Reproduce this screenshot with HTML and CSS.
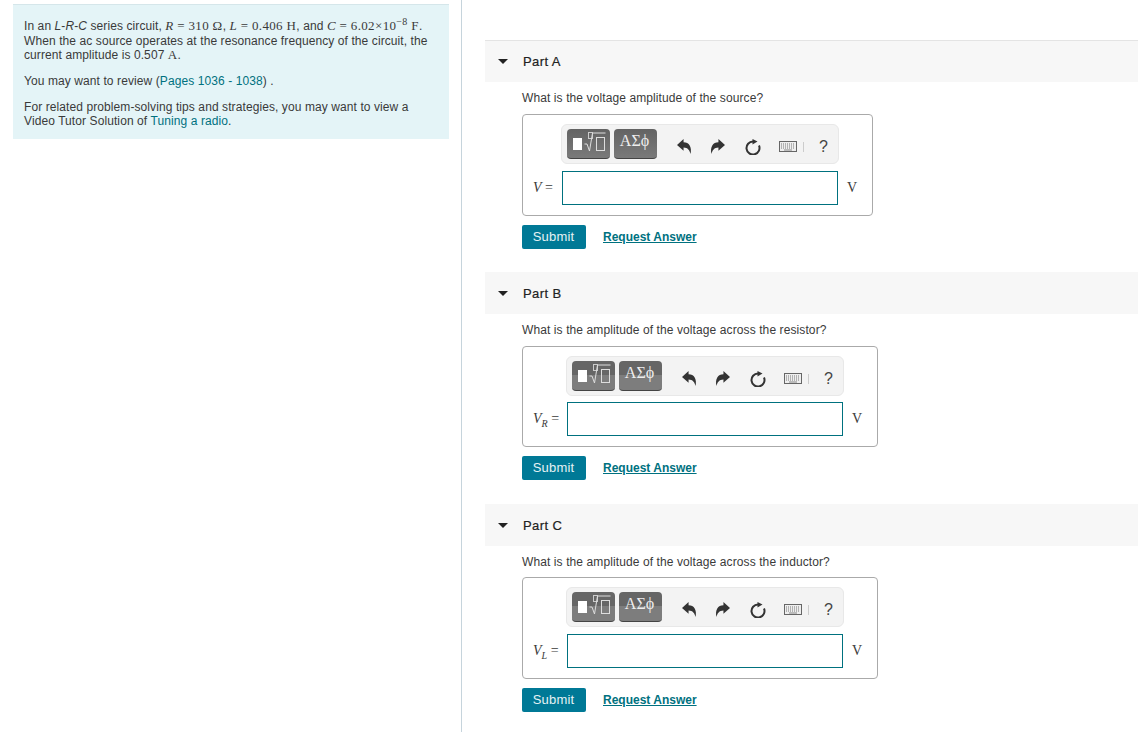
FILE: index.html
```html
<!DOCTYPE html>
<html lang="en">
<head>
    <meta charset="UTF-8">
    <title>L-R-C series circuit</title>
    <link rel="stylesheet" href="styles.css">
</head>
<body>

<svg class="icon-defs" width="0" height="0">
    <symbol id="i-template" viewBox="0 0 40 26">
        <rect x="4" y="7" width="9" height="12" fill="#fff"/>
        <rect x="19.5" y="1.5" width="4" height="6" fill="none" stroke="#ccc"/>
        <path d="M15.500 13l2.500 0 2.500 7 3-18h13" fill="none" stroke="#ddd"/>
        <rect x="27.500" y="6.500" width="8" height="13" fill="none" stroke="#ddd"/>
    </symbol>
    <symbol id="i-undo" viewBox="0 0 16 16">
        <path d="M0 6.500l7-6.500v3.500c6 0 9 5 7.500 12.500-1-4-3-7-7.500-7v3.500z" fill="#333"/>
    </symbol>
    <symbol id="i-redo" viewBox="0 0 16 16">
        <path d="M16 6.500l-7-6.500v3.500c-6 0-9 5-7.500 12.500 1-4 3-7 7.500-7v3.500z" fill="#333"/>
    </symbol>
    <symbol id="i-reset" viewBox="0 0 16 16">
        <path d="M8 2.500a6.500 6.500 0 1 0 6 4" fill="none" stroke="#333" stroke-width="2"/>
        <path d="M7.500 0l5 2.500-5 3z" fill="#333"/>
    </symbol>
    <symbol id="i-keyboard" viewBox="0 0 18 11">
        <rect x=".5" y=".5" width="17" height="10" fill="#eee" stroke="#666"/>
        <path d="M2 3h14M2 5h14M2 7h14" stroke="#777" stroke-dasharray="1 1"/>
        <path d="M5 9h8" stroke="#888"/>
    </symbol>
</svg>

<div class="page">
    <aside class="sidebar">
        <div class="intro">
            <p>In an <i>L</i>-<i>R</i>-<i>C</i> series circuit, <span class="math"><i>R</i> = 310 Ω</span>, <span class="math"><i>L</i> = 0.406 H</span>, and <span class="math"><i>C</i> = 6.02×10<sup>−8</sup> F</span>. When the ac source operates at the resonance frequency of the circuit, the current amplitude is 0.507 <span class="math">A</span>.</p>
            <p>You may want to review (<a href="#">Pages 1036 - 1038</a>) .</p>
            <p class="intro-last">For related problem-solving tips and strategies, you may want to view a Video Tutor Solution of <a href="#">Tuning a radio</a>.</p>
        </div>
    </aside>

    <main class="parts">
        <section class="part part-a">
            <h2 class="part-head"><span class="caret"></span>Part A</h2>
            <p class="question">What is the voltage amplitude of the source?</p>
            <div class="answer-box">
                <div class="toolbar">
                    <span class="tool-btn"><svg class="ico-template"><use href="#i-template"/></svg></span>
                    <span class="tool-btn tool-greek">ΑΣϕ</span>
                    <svg class="ico ico-undo"><use href="#i-undo"/></svg>
                    <svg class="ico ico-redo"><use href="#i-redo"/></svg>
                    <svg class="ico ico-reset"><use href="#i-reset"/></svg>
                    <svg class="ico-keyboard"><use href="#i-keyboard"/></svg>
                    <span class="tool-sep"></span>
                    <span class="tool-help">?</span>
                </div>
                <div class="answer-row">
                    <span class="var"><i>V</i> =</span>
                    <input class="answer-input" type="text">
                    <span class="unit">V</span>
                </div>
            </div>
            <div class="actions">
                <button class="submit" type="button">Submit</button>
                <a class="request" href="#">Request Answer</a>
            </div>
        </section>

        <section class="part part-sub part-b">
            <h2 class="part-head"><span class="caret"></span>Part B</h2>
            <p class="question">What is the amplitude of the voltage across the resistor?</p>
            <div class="answer-box">
                <div class="toolbar">
                    <span class="tool-btn"><svg class="ico-template"><use href="#i-template"/></svg></span>
                    <span class="tool-btn tool-greek">ΑΣϕ</span>
                    <svg class="ico ico-undo"><use href="#i-undo"/></svg>
                    <svg class="ico ico-redo"><use href="#i-redo"/></svg>
                    <svg class="ico ico-reset"><use href="#i-reset"/></svg>
                    <svg class="ico-keyboard"><use href="#i-keyboard"/></svg>
                    <span class="tool-sep"></span>
                    <span class="tool-help">?</span>
                </div>
                <div class="answer-row">
                    <span class="var"><i>V<sub>R</sub></i> =</span>
                    <input class="answer-input" type="text">
                    <span class="unit">V</span>
                </div>
            </div>
            <div class="actions">
                <button class="submit" type="button">Submit</button>
                <a class="request" href="#">Request Answer</a>
            </div>
        </section>

        <section class="part part-sub part-c">
            <h2 class="part-head"><span class="caret"></span>Part C</h2>
            <p class="question">What is the amplitude of the voltage across the inductor?</p>
            <div class="answer-box">
                <div class="toolbar">
                    <span class="tool-btn"><svg class="ico-template"><use href="#i-template"/></svg></span>
                    <span class="tool-btn tool-greek">ΑΣϕ</span>
                    <svg class="ico ico-undo"><use href="#i-undo"/></svg>
                    <svg class="ico ico-redo"><use href="#i-redo"/></svg>
                    <svg class="ico ico-reset"><use href="#i-reset"/></svg>
                    <svg class="ico-keyboard"><use href="#i-keyboard"/></svg>
                    <span class="tool-sep"></span>
                    <span class="tool-help">?</span>
                </div>
                <div class="answer-row">
                    <span class="var"><i>V<sub>L</sub></i> =</span>
                    <input class="answer-input" type="text">
                    <span class="unit">V</span>
                </div>
            </div>
            <div class="actions">
                <button class="submit" type="button">Submit</button>
                <a class="request" href="#">Request Answer</a>
            </div>
        </section>
    </main>
</div>

</body>
</html>
```

FILE: styles.css
```css
html, body {
    height: 100%;
}
body {
    margin: 0;
    font-family: "Liberation Sans", Arial, sans-serif;
    font-size: 12px;
    color: #3a3a3a;
    background: #fff;
    overflow: hidden;
}
.icon-defs {
    display: block;
    height: 0;
}
.page {
    display: flex;
    height: 732px;
}
.sidebar {
    width: 462px;
    box-sizing: border-box;
    flex: none;
    padding: 4px 12px 0 13px;
    border-right: 1px solid #c6d4dc;
}
.intro {
    height: 135px;
    box-sizing: border-box;
    padding: 14px 11px 0;
    background: #e4f4f7;
    border-top: 1px solid #d5e6ea;
    line-height: 14.5px;
    letter-spacing: 0.09px;
}
.intro p {
    margin: 0 0 11.5px;
}
.intro .intro-last {
    line-height: 14px;
}
.intro a {
    color: #00717f;
    text-decoration: none;
}
.math {
    font-family: "Liberation Serif", serif;
    font-size: 13px;
    letter-spacing: 0.35px;
}
.intro sup {
    font-size: 10px;
    line-height: 0;
}
.parts {
    flex: 1;
    padding: 40px 0 0 23px;
    min-width: 0;
}
.part-head {
    display: flex;
    align-items: center;
    height: 42px;
    margin: 0;
    box-sizing: border-box;
    padding-left: 13px;
    background: #f7f7f7;
    font-size: 13px;
    font-weight: normal;
    letter-spacing: 0.4px;
    color: #222;
    -webkit-text-stroke: 0.2px #222;
}
.part-a .part-head {
    border-top: 1px solid #e4e4e4;
}
.caret {
    width: 0;
    height: 0;
    margin-right: 15px;
    border-style: solid;
    border-width: 5px 5px 0;
    border-color: #222 transparent transparent;
}
.question {
    margin: 0;
    height: 32px;
    padding-left: 37px;
    line-height: 32px;
    letter-spacing: 0.1px;
}
.part-c .question {
    height: 31px;
}
.answer-box {
    width: 351px;
    height: 102px;
    box-sizing: border-box;
    margin-left: 37px;
    padding: 9px 10px 0;
    border: 1px solid #aaa;
    border-radius: 4px;
}
.part-sub .answer-box {
    width: 356px;
}
.part-b .answer-box {
    height: 101px;
}
.toolbar {
    display: flex;
    align-items: center;
    width: 278px;
    height: 40px;
    box-sizing: border-box;
    margin-left: 28px;
    padding-left: 5px;
    background: #f3f3f3;
    border: 1px solid #e8e8e8;
    border-radius: 6px;
}
.part-sub .toolbar {
    margin-left: 33px;
}
.tool-btn {
    display: flex;
    justify-content: center;
    width: 43px;
    height: 30px;
    box-sizing: border-box;
    margin-right: 4px;
    padding-top: 2px;
    background: linear-gradient(#636363, #7a7a7a);
    border-bottom: 1px solid #444;
    border-radius: 4px;
}
.part-sub .tool-btn {
    background: linear-gradient(#666 50%, #7d7d7d 50%);
}
.tool-greek {
    padding-right: 2px;
    font-family: "Liberation Serif", serif;
    font-size: 16px;
    line-height: 20px;
    color: #eee;
}
.ico-template {
    width: 40px;
    height: 26px;
}
.ico {
    width: 15px;
    height: 15px;
    margin-top: 5px;
}
.ico-undo {
    margin-left: 16px;
}
.ico-redo {
    margin-left: 18px;
}
.ico-reset {
    margin-left: 20px;
    width: 16px;
    height: 16px;
}
.ico-keyboard {
    width: 18px;
    height: 11px;
    margin: 5px 0 0 18px;
}
.tool-sep {
    width: 1px;
    height: 10px;
    margin: 5px 0 0 6px;
    background: #ccc;
}
.tool-help {
    margin: 6px 0 0 15px;
    font-size: 16px;
    color: #444;
}
.answer-row {
    display: flex;
    align-items: center;
    margin-top: 7px;
    font-family: "Liberation Serif", serif;
    font-size: 14px;
}
.part-b .answer-row {
    margin-top: 6px;
}
.var {
    width: 29px;
    flex: none;
    white-space: nowrap;
}
.part-sub .var {
    width: 34px;
}
.var sub {
    font-size: 10px;
    line-height: 0;
}
.answer-input {
    width: 276px;
    height: 34px;
    box-sizing: border-box;
    margin: 0;
    border: 1px solid #00717f;
    background: #fff;
}
.unit {
    margin-left: 9px;
}
.actions {
    display: flex;
    align-items: center;
    margin: 9px 0 23px 37px;
}
.part-b .actions {
    margin-bottom: 24px;
}
.submit {
    width: 64px;
    height: 24px;
    padding: 0 1px 2px 0;
    border: 0;
    border-radius: 2px;
    background: #007996;
    color: #e6f2f5;
    font-family: inherit;
    font-size: 13px;
    letter-spacing: 0.2px;
}
.request {
    margin-left: 17px;
    color: #00717f;
    font-size: 12px;
    font-weight: bold;
}
```
